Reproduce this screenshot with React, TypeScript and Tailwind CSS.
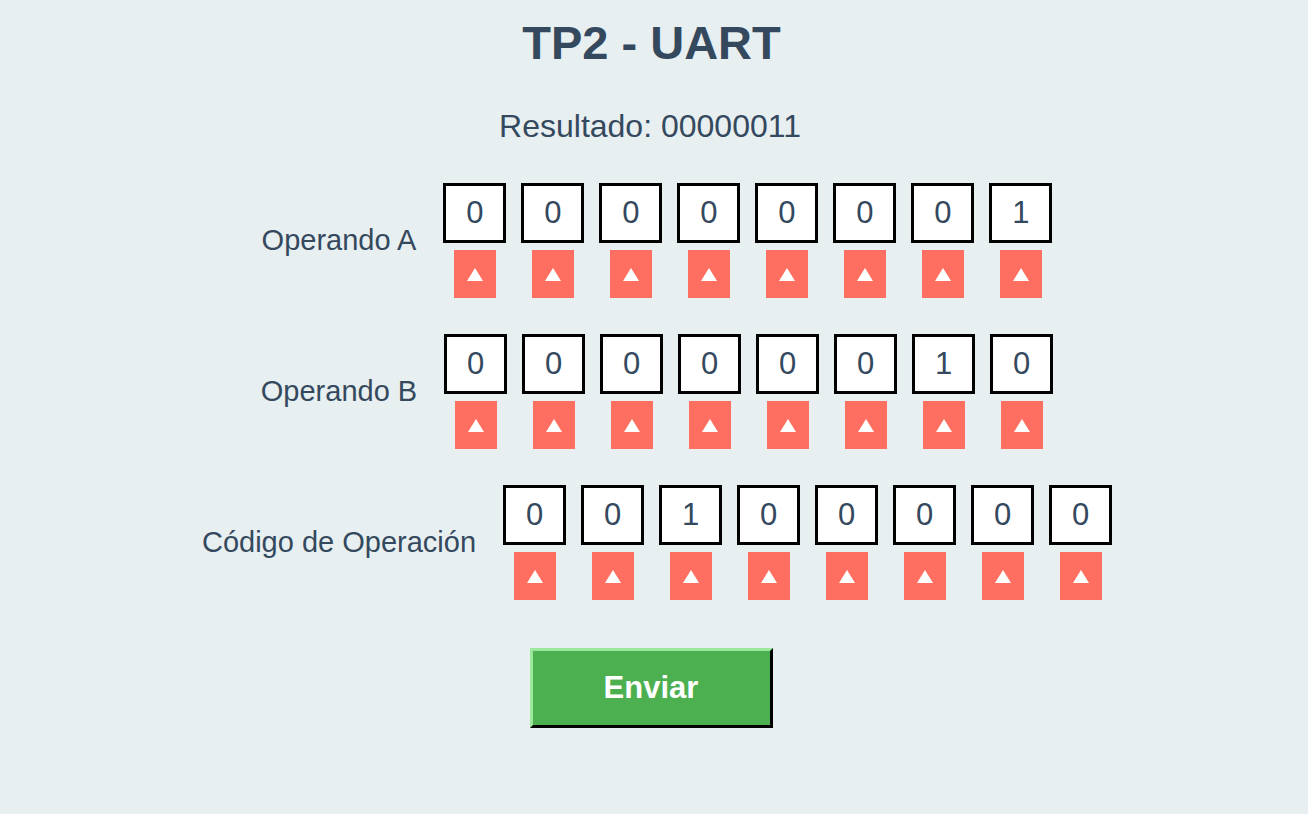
import React from 'react';

const rows: { label: string; bits: string }[] = [
  { label: 'Operando A', bits: '00000001' },
  { label: 'Operando B', bits: '00000010' },
  { label: 'Código de Operación', bits: '00100000' },
];

function BitColumn({ bit }: { bit: string }) {
  return (
    <div className="flex flex-col items-center gap-[7px]">
      <div className="w-[63px] h-[60px] border-[3px] border-black bg-white flex items-center justify-center text-[31px] text-[#34495e]">
        {bit}
      </div>
      <button className="w-[42px] h-[48px] bg-[#ff6f61] flex items-center justify-center">
        <svg width="16" height="13" viewBox="0 0 16 13">
          <polygon points="8,0 16,13 0,13" fill="#fff" />
        </svg>
      </button>
    </div>
  );
}

export default function App() {
  return (
    <div
      className="min-h-screen bg-[#e8eff1] flex flex-col items-center text-[#34495e]"
      style={{ fontFamily: '"Liberation Sans", Arial, sans-serif' }}
    >
      <h1 className="mt-[19px] mr-[5px] text-[47px] leading-none font-bold">TP2 - UART</h1>

      <p className="mt-[44px] mr-[8px] text-[32px] leading-none">Resultado: 00000011</p>

      <div className="mt-[41px] w-full flex flex-col gap-[36px] pl-[6px]">
        {rows.map((row) => (
          <div key={row.label} className="flex items-center justify-center gap-[27px]">
            <span className="text-[29px]">{row.label}</span>
            <div className="flex gap-[15px]">
              {row.bits.split('').map((b, i) => (
                <BitColumn key={i} bit={b} />
              ))}
            </div>
          </div>
        ))}
      </div>

      <button className="mt-[48px] mr-[6px] w-[243px] h-[80px] bg-[#4caf50] text-white text-[31px] font-bold border-t-[3px] border-l-[3px] border-r-[3px] border-b-[3px] border-t-[#9be89b] border-l-[#9be89b] border-r-black border-b-black">
        Enviar
      </button>
    </div>
  );
}
